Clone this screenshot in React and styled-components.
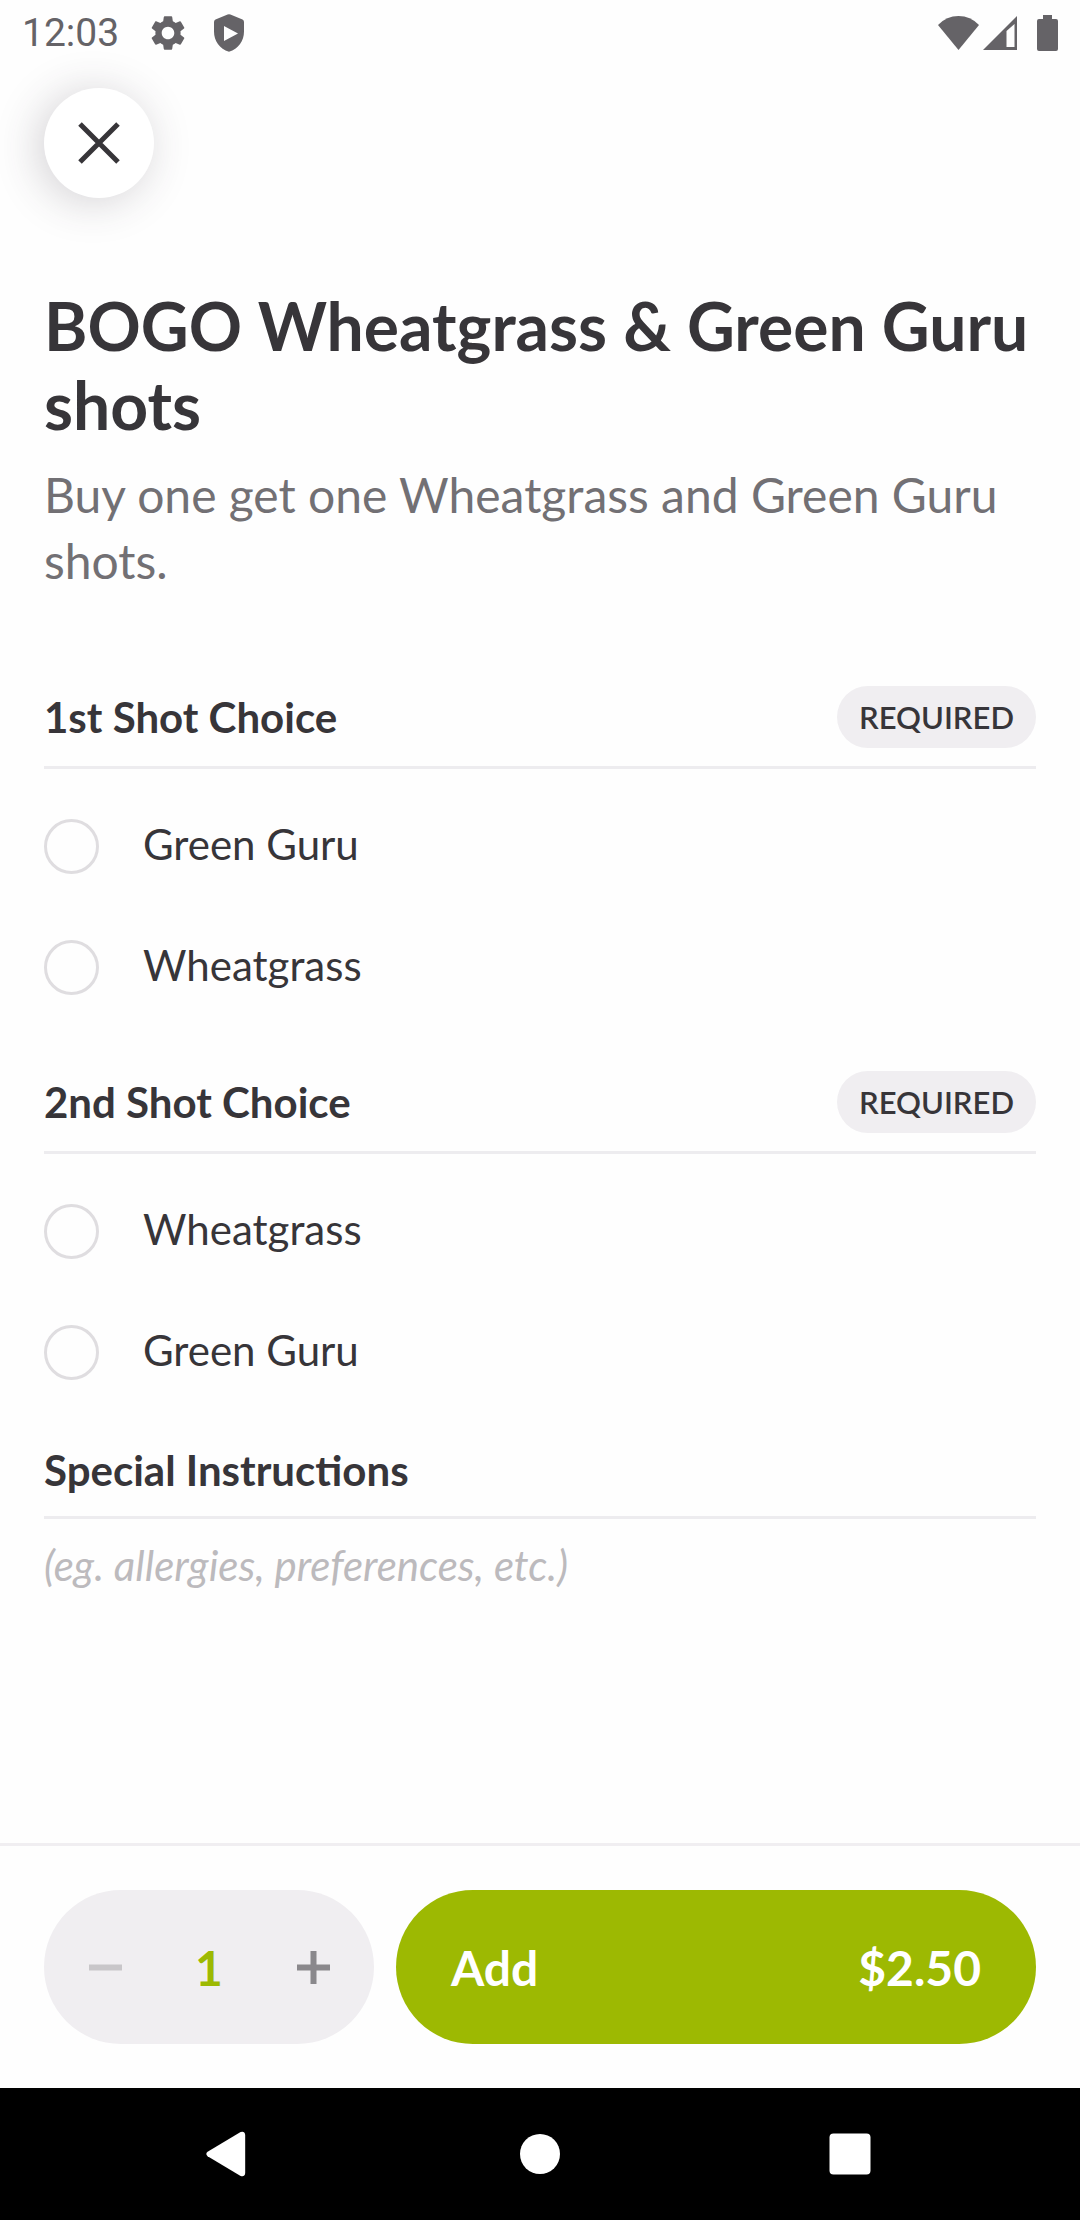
import React, { useState } from "react";
import styled, { createGlobalStyle } from "styled-components";
import { MdSettings } from "react-icons/md";

const groups = [
  {
    id: "first-shot",
    title: "1st Shot Choice",
    options: ["Green Guru", "Wheatgrass"],
  },
  {
    id: "second-shot",
    title: "2nd Shot Choice",
    options: ["Wheatgrass", "Green Guru"],
  },
];

const PRICE = 2.5;

const App = () => {
  const [choices, setChoices] = useState({});
  const [notes, setNotes] = useState("");
  const [count, setCount] = useState(1);

  //* option handler
  const handleChoice = (groupId, option) => {
    setChoices({ ...choices, [groupId]: option });
  };

  return (
    <Screen>
      <GlobalStyle />
      <StatusBar>
        <StatusGroup>
          <Clock>12:03</Clock>
          <MdSettings size={42} />
          <ShieldIcon />
        </StatusGroup>
        <SignalGroup>
          <WifiIcon />
          <CellIcon />
          <BatteryIcon />
        </SignalGroup>
      </StatusBar>

      <Content>
        <CloseButton type="button" aria-label="Close">
          <svg width="42" height="42" viewBox="0 0 42 42">
            <path d="M2 2L40 40M40 2L2 40" />
          </svg>
        </CloseButton>

        <Title>BOGO Wheatgrass &amp; Green Guru shots</Title>
        <Description>
          Buy one get one Wheatgrass and Green Guru shots.
        </Description>

        {groups.map((group) => (
          <Section key={group.id} role="radiogroup" aria-labelledby={group.id}>
            <SectionHeader>
              <SectionTitle id={group.id}>{group.title}</SectionTitle>
              <Badge>REQUIRED</Badge>
            </SectionHeader>
            <Options>
              {group.options.map((option) => (
                <Option key={option}>
                  <Radio
                    type="radio"
                    name={group.id}
                    checked={choices[group.id] === option}
                    onChange={() => handleChoice(group.id, option)}
                  />
                  <OptionText>{option}</OptionText>
                </Option>
              ))}
            </Options>
          </Section>
        ))}

        <NotesLabel htmlFor="notes">Special Instructions</NotesLabel>
        <Notes
          id="notes"
          rows={2}
          placeholder="(eg. allergies, preferences, etc.)"
          value={notes}
          onChange={(e) => setNotes(e.target.value)}
        />
      </Content>

      <Footer>
        <Stepper>
          <StepButton
            type="button"
            aria-label="Decrease quantity"
            disabled={count === 1}
            onClick={() => setCount(count - 1)}
          >
            <svg width="33" height="33" viewBox="0 0 33 33">
              <path d="M0 16.5H33" />
            </svg>
          </StepButton>
          <Count>{count}</Count>
          <StepButton
            type="button"
            aria-label="Increase quantity"
            onClick={() => setCount(count + 1)}
          >
            <svg width="33" height="33" viewBox="0 0 33 33">
              <path d="M0 16.5H33M16.5 0V33" />
            </svg>
          </StepButton>
        </Stepper>
        <AddButton type="button">
          <span>Add</span>
          <span>${(PRICE * count).toFixed(2)}</span>
        </AddButton>
      </Footer>

      <NavBar>
        <NavButton type="button" aria-label="Back">
          <svg width="50" height="46" viewBox="0 0 50 46">
            <path d="M2.6 20.8L35.6 1.1Q39.6 -0.4 40.2 4V42Q39.6 46.4 35.6 44.9L2.6 25.2Q0 23 2.6 20.8Z" />
          </svg>
        </NavButton>
        <NavButton type="button" aria-label="Home">
          <svg width="42" height="42" viewBox="0 0 42 42">
            <circle cx="21" cy="21" r="20" />
          </svg>
        </NavButton>
        <NavButton type="button" aria-label="Overview">
          <svg width="42" height="42" viewBox="0 0 42 42">
            <rect x="0.5" y="0.5" width="41" height="41" rx="4" />
          </svg>
        </NavButton>
      </NavBar>
    </Screen>
  );
};

export default App;

//* icons
const ShieldIcon = () => (
  <svg width="32" height="38" viewBox="0 0 32 38" fill="currentColor">
    <path
      fillRule="evenodd"
      d="M14.6 0.5Q16 -0.1 17.4 0.5L29.5 5.6Q31 6.3 31 8V17.5C31 27 25.5 34.8 16 37.8C6.5 34.8 1 27 1 17.5V8Q1 6.3 2.5 5.6ZM11 12V27L25 19.5Z"
    />
  </svg>
);

const WifiIcon = () => (
  <svg width="41" height="34" viewBox="0 0 41 34" fill="currentColor">
    <path d="M0 9Q8.5 0 20.5 0T41 9L20.5 34Z" />
  </svg>
);

const CellIcon = () => (
  <svg width="34" height="34" viewBox="0 0 34 34" fill="currentColor">
    <path fillRule="evenodd" d="M0 34L34 0V34ZM23.5 15V31H31.5V8Z" />
  </svg>
);

const BatteryIcon = () => (
  <svg width="21" height="36" viewBox="0 0 21 36" fill="currentColor">
    <path d="M6 0H15V4H19Q21 4 21 6V34Q21 36 19 36H2Q0 36 0 34V6Q0 4 2 4H6Z" />
  </svg>
);

//* styled-components
const GlobalStyle = createGlobalStyle`
  * {
    box-sizing: border-box;
  }

  body {
    margin: 0;
    background-color: #fefefe;
    color: #373539;
    font-family: Lato, "Liberation Sans", sans-serif;
  }

  button,
  input,
  textarea {
    margin: 0;
    padding: 0;
    border: none;
    background: none;
    color: inherit;
    font: inherit;
  }

  svg {
    display: block;
    flex-shrink: 0;
  }
`;

const Screen = styled.div`
  display: flex;
  flex-direction: column;
  min-height: 100vh;
`;

const StatusBar = styled.div`
  display: flex;
  align-items: center;
  justify-content: space-between;
  height: 66px;
  padding: 0 22px;
  color: #656367;
`;

const StatusGroup = styled.div`
  display: flex;
  align-items: center;
  gap: 24px;
`;

const SignalGroup = styled.div`
  display: flex;
  align-items: center;
  gap: 4px;

  svg:last-child {
    margin-left: 16px;
  }
`;

const Clock = styled.time`
  margin-right: 4px;
  font-family: Roboto, sans-serif;
  font-size: 39px;
  line-height: 44px;
`;

const Content = styled.main`
  display: flex;
  flex: 1;
  flex-direction: column;
  padding: 22px 44px 44px;
`;

const CloseButton = styled.button`
  display: flex;
  align-items: center;
  justify-content: center;
  width: 110px;
  height: 110px;
  border-radius: 50%;
  background-color: #ffffff;
  box-shadow: -6px 4px 44px rgba(60, 50, 66, 0.22);
  cursor: pointer;

  path {
    stroke: #373539;
    stroke-width: 5;
  }
`;

const Title = styled.h1`
  margin: 88px 0 18px;
  font-size: 66px;
  font-weight: 700;
  line-height: 79px;
`;

const Description = styled.p`
  margin: 0 0 92px;
  color: #727074;
  font-size: 48px;
  line-height: 66px;
`;

const Section = styled.section`
  margin-bottom: 43px;

  &:last-of-type {
    margin-bottom: 33px;
  }
`;

const SectionHeader = styled.div`
  display: flex;
  align-items: center;
  justify-content: space-between;
  padding-bottom: 18px;
  border-bottom: 3px solid #edecef;
`;

const SectionTitle = styled.h2`
  margin: 0;
  font-size: 42px;
  font-weight: 700;
  line-height: 48px;
`;

const Badge = styled.span`
  padding: 0 22px;
  border-radius: 31px;
  background-color: #f0eef1;
  font-size: 31px;
  font-weight: 600;
  line-height: 62px;
`;

const Options = styled.div`
  padding-top: 17px;
`;

const Option = styled.label`
  display: flex;
  align-items: center;
  gap: 44px;
  height: 121px;
  cursor: pointer;
`;

const Radio = styled.input`
  appearance: none;
  width: 55px;
  height: 55px;
  border: 3px solid #dfdde0;
  border-radius: 50%;

  &:checked {
    border: 16px solid #9db902;
  }
`;

const OptionText = styled.span`
  padding-bottom: 6px;
  font-size: 42px;
  line-height: 48px;
`;

const NotesLabel = styled.label`
  padding-bottom: 22px;
  border-bottom: 3px solid #edecef;
  font-size: 42px;
  font-weight: 700;
  line-height: 48px;
`;

const Notes = styled.textarea`
  width: 100%;
  padding-top: 22px;
  outline: none;
  font-size: 42px;
  line-height: 48px;
  resize: none;

  &::placeholder {
    color: #bcbabd;
    font-style: italic;
  }
`;

const Footer = styled.footer`
  display: flex;
  gap: 22px;
  padding: 44px;
  border-top: 3px solid #f0eef1;
`;

const Stepper = styled.div`
  display: flex;
  align-items: center;
  justify-content: space-between;
  width: 330px;
  height: 154px;
  padding: 0 22px;
  border-radius: 77px;
  background-color: #f0eef1;
`;

const StepButton = styled.button`
  display: flex;
  align-items: center;
  justify-content: center;
  width: 78px;
  height: 110px;
  cursor: pointer;

  path {
    stroke: #8a888c;
    stroke-width: 6;
  }

  &:disabled path {
    stroke: #c8c6c9;
  }
`;

const Count = styled.output`
  color: #9db902;
  font-size: 48px;
  font-weight: 700;
`;

const AddButton = styled.button`
  display: flex;
  flex: 1;
  align-items: center;
  justify-content: space-between;
  padding: 0 55px;
  border-radius: 77px;
  background-color: #9db902;
  color: #ffffff;
  font-size: 48px;
  font-weight: 700;
  cursor: pointer;
`;

const NavBar = styled.nav`
  display: grid;
  grid-template-columns: repeat(3, 1fr);
  height: 132px;
  padding: 0 75px;
  background-color: #000000;
`;

const NavButton = styled.button`
  display: flex;
  align-items: center;
  justify-content: center;
  fill: #ffffff;
`;
